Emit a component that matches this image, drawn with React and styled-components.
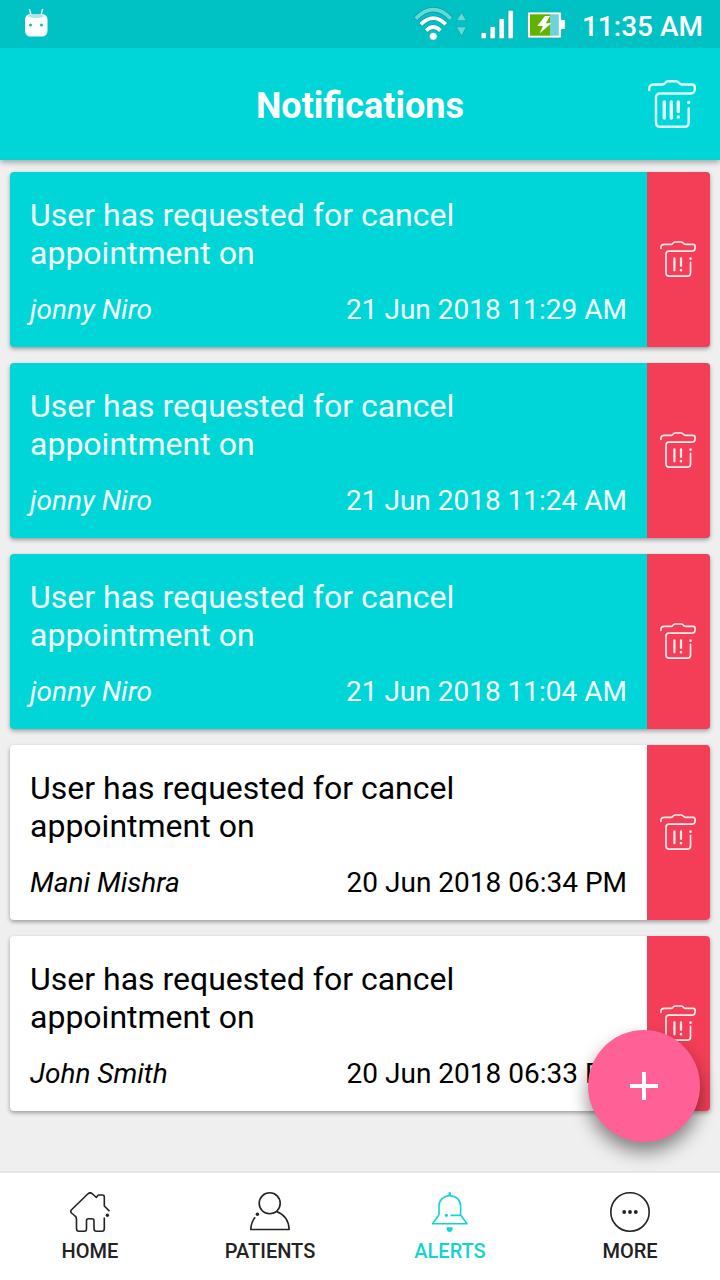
import React from 'react'
import styled, { createGlobalStyle } from 'styled-components'

const GlobalStyle = createGlobalStyle`
    :root {
        --teal: #00d6d7;
        --dark-teal: #00c2c4;
        --red: #f43e57;
        --pink: #ff6096;
        --gray: #efefef;
    }
    * {
        box-sizing: border-box;
    }
    body {
        margin: 0;
        background-color: var(--gray);
        font-family: Roboto, "Liberation Sans", sans-serif;
    }
    h1, p {
        margin: 0;
    }
    button {
        border: none;
        padding: 0;
        font-family: inherit;
        cursor: pointer;
    }
    svg {
        display: block;
    }
`

const Page = styled.div`
    display: flex;
    flex-direction: column;
    min-height: 100vh;
`

const Top = styled.div`
    position: sticky;
    top: 0;
    z-index: 1;
    color: #fff;
    box-shadow: 0 2px 6px rgba(0, 0, 0, 0.35);
`

const StatusBar = styled.div`
    display: flex;
    justify-content: space-between;
    align-items: center;
    height: 48px;
    padding: 0 17px 0 24px;
    background-color: var(--dark-teal);
`

const StatusIcons = styled.div`
    display: flex;
    align-items: center;
    gap: 12px;
`

const Clock = styled.time`
    margin-left: 3px;
    padding-top: 6px;
    font-size: 28px;
    font-weight: 500;
    line-height: 32px;
`

const Header = styled.header`
    display: grid;
    grid-template-columns: 1fr auto 1fr;
    align-items: center;
    height: 112px;
    padding: 0 24px;
    background-color: var(--teal);
`

const Title = styled.h1`
    grid-column: 2;
    padding-top: 4px;
    font-size: 36px;
    font-weight: 700;
    line-height: 42px;
`

const ClearButton = styled.button`
    justify-self: end;
    color: #e2ffff;
    background: none;
`

const List = styled.main`
    flex: 1;
    display: flex;
    flex-direction: column;
    gap: 16px;
    padding: 12px 10px 60px;
`

const Card = styled.article`
    display: flex;
    overflow: hidden;
    border-radius: 4px;
    color: ${props => props.$unread ? '#f6ffff' : '#000'};
    background-color: ${props => props.$unread ? 'var(--teal)' : '#fff'};
    box-shadow: 0 2px 4px rgba(0, 0, 0, 0.35);
`

const CardBody = styled.div`
    flex: 1;
    padding: 24px 20px 20px;
`

const Message = styled.p`
    margin-bottom: 21px;
    font-size: 32px;
    line-height: 38px;
`

const Meta = styled.div`
    display: flex;
    justify-content: space-between;
    font-size: 28px;
    line-height: 34px;
`

const Sender = styled.span`
    font-style: italic;
`

const DeleteButton = styled.button`
    display: flex;
    justify-content: center;
    align-items: center;
    width: 63px;
    padding: 0 1px 1px 0;
    color: #ffeef0;
    background-color: var(--red);
`

const AddButton = styled.button`
    position: fixed;
    right: 20px;
    bottom: 138px;
    z-index: 2;
    display: flex;
    justify-content: center;
    align-items: center;
    width: 112px;
    height: 112px;
    border-radius: 50%;
    color: #fff;
    background-color: var(--pink);
    box-shadow: 0 10px 18px rgba(0, 0, 0, 0.45);
`

const TabBar = styled.nav`
    position: sticky;
    bottom: 0;
    display: grid;
    grid-template-columns: repeat(4, 1fr);
    height: 110px;
    border-top: 2px solid #e6e6e6;
    background-color: #fff;
`

const Tab = styled.a`
    display: flex;
    flex-direction: column;
    align-items: center;
    gap: 7px;
    padding-top: 19px;
    font-size: 20px;
    font-weight: 500;
    line-height: 24px;
    text-decoration: none;
    color: ${props => props.$active ? '#14d3d1' : '#222'};
`

const AndroidIcon = () => (
    <svg width="24" height="32" viewBox="0 0 24 32" aria-hidden="true">
        <path d="M5.500 1.500 7 7M18.500 1.500 17 7" stroke="#d8f8f8" strokeWidth="1.500" strokeLinecap="round"/>
        <rect x="1" y="6" width="22.500" height="22.500" rx="5.500" fill="#fff"/>
        <path d="M4 8.500Q5 6 8 6h8q3 0 4 2.500Q12 11.500 4 8.500Z" fill="#a6e8e8"/>
        <circle cx="6.500" cy="17" r="1.600" fill="#2cb8a8"/>
        <circle cx="17.500" cy="17" r="1.600" fill="#2cb8a8"/>
    </svg>
)

const WifiIcon = () => (
    <svg width="54" height="36" viewBox="0 0 54 36" fill="none" aria-hidden="true">
        <path d="M2.500 12.800Q20.300-5.500 38.100 12.800" stroke="#109ea0" strokeWidth="5.500"/>
        <path d="M2.800 12.600Q20.300-5.200 37.800 12.600" stroke="#62d9da" strokeWidth="3.800"/>
        <path d="M7.600 18.600Q20.300 5.600 33 18.600M13 24.800Q20.300 17.400 27.600 24.800" stroke="#109ea0" strokeWidth="5.200"/>
        <path d="M7.800 18.400Q20.300 5.800 32.800 18.400M13.200 24.600Q20.300 17.600 27.400 24.600" stroke="#fff" strokeWidth="3.800"/>
        <circle cx="20.300" cy="30.300" r="3.900" fill="#fff" stroke="#109ea0" strokeWidth="0.600"/>
        <path d="M43.300 14.800 48.500 6.500 53.600 14.800ZM43.300 20.800H53.600L48.500 30Z" fill="#62d9da" stroke="#109ea0" strokeWidth="0.700"/>
    </svg>
)

const SignalIcon = () => (
    <svg width="36" height="30" viewBox="0 0 36 30" fill="#fff" stroke="#109ea0" strokeWidth="0.700" aria-hidden="true">
        <rect x="2" y="23.500" width="5.300" height="6.300" rx="1.200"/>
        <rect x="11" y="17.500" width="5.300" height="12.300" rx="1.200"/>
        <rect x="20" y="9.500" width="5.300" height="20.300" rx="1.200"/>
        <rect x="29" y="1.200" width="5.300" height="28.600" rx="1.200"/>
    </svg>
)

const BatteryIcon = () => (
    <svg width="40" height="30" viewBox="0 0 40 30" aria-hidden="true">
        <path d="M0.500 3H34.300V10.500H38.300V20.500H34.300V29H0.500Z" fill="#fff" stroke="#109ea0" strokeWidth="0.700"/>
        <rect x="3" y="5.300" width="20" height="21.400" fill="#62b300"/>
        <rect x="23" y="5.300" width="8.800" height="21.400" fill="#6fd2d6"/>
        <path d="M18 7 10.300 17H16L12.500 24.500 24.300 14.300H18.800L23 7Z" fill="#fff"/>
    </svg>
)

const BinIcon = ({ size, full }) => (
    <svg
        width={size}
        height={size}
        viewBox="0 0 48 48"
        fill="none"
        stroke="currentColor"
        strokeWidth={full ? 2.4 : 2.2}
        strokeLinecap="round"
        aria-hidden="true"
    >
        <path d="M1.200 10V9Q1.200 4.500 6 4.500H14.500C17.500 4.500 17 1.300 20 1.300H28C31 1.300 31 4.500 34 4.500H44Q46.800 4.500 46.800 7.500V9Q46.800 13.500 42.500 13.500H12Q8 13.500 8 17.500V42.500Q8 46.800 12.300 46.800H36.500Q40.700 46.800 40.700 42.500V28.500"/>
        {full
            ? <path d="M16.300 22V38M23.300 22V38M30.300 22V31.500" strokeWidth="3.400"/>
            : <path d="M19.200 23V39M28 23V33" strokeWidth="3"/>}
        <path d={full ? 'M30.300 37V37.100M40.700 22.500V22.600' : 'M28 38.800V38.900M40.700 23.500V23.600'} strokeWidth="3.400"/>
    </svg>
)

const TabIcon = ({ children }) => (
    <svg
        width="40"
        height="40"
        viewBox="0 0 40 40"
        fill="none"
        stroke="currentColor"
        strokeWidth="1.600"
        strokeLinejoin="round"
        aria-hidden="true"
    >
        {children}
    </svg>
)

const HomeIcon = () => (
    <TabIcon>
        <path d="M39.500 19.200 34.300 14V5Q34.300 3 32.300 3H29Q28 3 27.500 4L26.300 5.500 22 1.500Q20 0 18 1.800L1.500 17.800Q0 19.500 1.500 21L5 24Q6.500 25 6.500 27V36.500Q6.500 39.200 9 39.200H14.200Q16.500 39.200 16.500 36.800V28.500Q16.500 26.700 18.500 26.700H21.800Q24 26.700 24 28.500V36.800Q24 39.200 26.500 39.200H32Q34.300 39.200 34.300 36.500V25.500"/>
        <circle cx="37.400" cy="23.300" r="1.700" fill="currentColor" stroke="none"/>
    </TabIcon>
)

const PatientsIcon = () => (
    <TabIcon>
        <circle cx="19.700" cy="11.300" r="10.500"/>
        <path d="M5.200 25.200Q1 30 0.800 37.500H39.200Q38.500 24 26.500 19.500"/>
        <circle cx="7.400" cy="22.300" r="1.700" fill="currentColor" stroke="none"/>
    </TabIcon>
)

const AlertsIcon = () => (
    <TabIcon>
        <path d="M19.700 0.300V4" strokeWidth="2.500"/>
        <path d="M9 23V14C9 8 13.500 3.800 19.800 3.800S30.600 8 30.600 14V23L37 31.800H2.500L9 23M20.500 23.400H30.600"/>
        <circle cx="16.400" cy="23.300" r="1.600" fill="currentColor" stroke="none"/>
        <path d="M16.700 35.200H22.500V37.500Q22 40 19.600 40T16.700 37.500Z" fill="currentColor" stroke="none"/>
    </TabIcon>
)

const MoreIcon = () => (
    <TabIcon>
        <circle cx="20" cy="20" r="19.200"/>
        <g fill="currentColor" stroke="none">
            <circle cx="14.200" cy="20" r="1.900"/>
            <circle cx="20" cy="20" r="1.900"/>
            <circle cx="25.800" cy="20" r="1.900"/>
        </g>
    </TabIcon>
)

const message = 'User has requested for cancel appointment on'

const notifications = [
    { id: 1, sender: 'jonny Niro', date: '21 Jun 2018 11:29 AM', unread: true },
    { id: 2, sender: 'jonny Niro', date: '21 Jun 2018 11:24 AM', unread: true },
    { id: 3, sender: 'jonny Niro', date: '21 Jun 2018 11:04 AM', unread: true },
    { id: 4, sender: 'Mani Mishra', date: '20 Jun 2018 06:34 PM', unread: false },
    { id: 5, sender: 'John Smith', date: '20 Jun 2018 06:33 PM', unread: false },
]

const tabs = [
    { label: 'HOME', Icon: HomeIcon },
    { label: 'PATIENTS', Icon: PatientsIcon },
    { label: 'ALERTS', Icon: AlertsIcon, active: true },
    { label: 'MORE', Icon: MoreIcon },
]

const App = () => {
    return (
        <Page>
            <GlobalStyle/>
            <Top>
                <StatusBar>
                    <AndroidIcon/>
                    <StatusIcons>
                        <WifiIcon/>
                        <SignalIcon/>
                        <BatteryIcon/>
                        <Clock>11:35 AM</Clock>
                    </StatusIcons>
                </StatusBar>
                <Header>
                    <Title>Notifications</Title>
                    <ClearButton aria-label="Delete all"><BinIcon size={48} full/></ClearButton>
                </Header>
            </Top>
            <List>
                {notifications.map(item => (
                    <Card key={item.id} $unread={item.unread}>
                        <CardBody>
                            <Message>{message}</Message>
                            <Meta>
                                <Sender>{item.sender}</Sender>
                                <time>{item.date}</time>
                            </Meta>
                        </CardBody>
                        <DeleteButton aria-label="Delete"><BinIcon size={36}/></DeleteButton>
                    </Card>
                ))}
            </List>
            <AddButton aria-label="Add">
                <svg width="28" height="28" viewBox="0 0 28 28" aria-hidden="true">
                    <path d="M14 0V28M0 14H28" stroke="currentColor" strokeWidth="4"/>
                </svg>
            </AddButton>
            <TabBar>
                {tabs.map(({ label, Icon, active }) => (
                    <Tab key={label} href={`#${label.toLowerCase()}`} $active={active}>
                        <Icon/>
                        {label}
                    </Tab>
                ))}
            </TabBar>
        </Page>
    )
}

export default App
